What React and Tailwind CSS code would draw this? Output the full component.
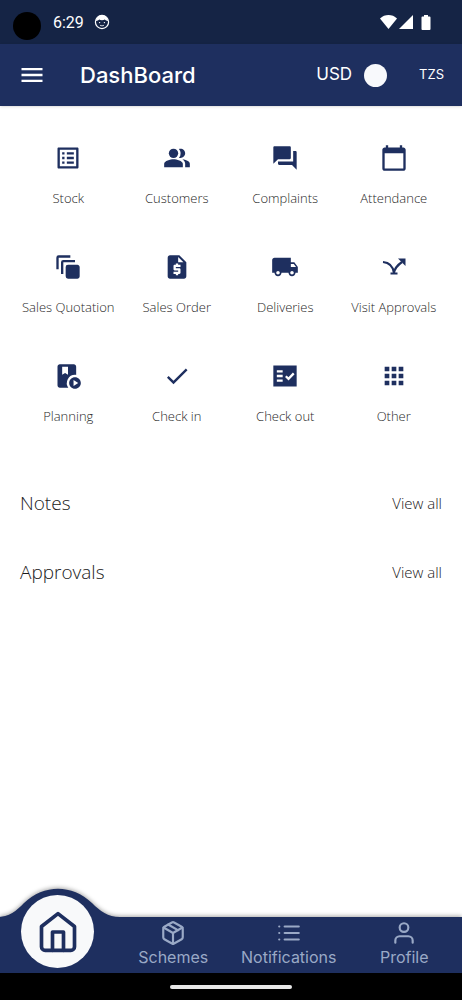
import React, { useState } from 'react';
import {
  MdMenu, MdListAlt, MdPeopleAlt, MdQuestionAnswer, MdCalendarToday,
  MdAutoAwesomeMotion, MdRequestQuote, MdLocalShipping, MdPlayLesson,
  MdCheck, MdApps
} from 'react-icons/md';
import { FiHome, FiPackage, FiList, FiUser } from 'react-icons/fi';

const VisitIcon = ({ className }) => (
  <svg viewBox="0 0 28 28" className={className} fill="none" aria-hidden="true">
    <path d="M3 9C9 9.5 13 13 14 20" stroke="currentColor" strokeWidth="2.2" />
    <path d="M14 20C14.5 15.5 17 12.5 22 9" stroke="currentColor" strokeWidth="2.2" />
    <path d="M18 5.5H25.5V13Z" fill="currentColor" />
    <path d="M10.5 20.5H17.5" stroke="currentColor" strokeWidth="2" />
  </svg>
);

const CheckOutIcon = ({ className }) => (
  <svg viewBox="0 0 24 24" className={className} aria-hidden="true">
    <path d="M2 3H22V21H2Z" fill="currentColor" />
    <path d="M5 8H10M5 12H10M5 16H10" stroke="#fff" strokeWidth="2" />
    <path d="M12.700 12.200 15 14.400 19.500 9.800" fill="none" stroke="#fff" strokeWidth="2" />
  </svg>
);

const menuItems = [
  { label: 'Stock', icon: MdListAlt },
  { label: 'Customers', icon: MdPeopleAlt },
  { label: 'Complaints', icon: MdQuestionAnswer },
  { label: 'Attendance', icon: MdCalendarToday },
  { label: 'Sales Quotation', icon: MdAutoAwesomeMotion },
  { label: 'Sales Order', icon: MdRequestQuote },
  { label: 'Deliveries', icon: MdLocalShipping },
  { label: 'Visit Approvals', icon: VisitIcon },
  { label: 'Planning', icon: MdPlayLesson },
  { label: 'Check in', icon: MdCheck },
  { label: 'Check out', icon: CheckOutIcon },
  { label: 'Other', icon: MdApps }
];

const tabs = [
  { label: 'Schemes', icon: FiPackage },
  { label: 'Notifications', icon: FiList },
  { label: 'Profile', icon: FiUser }
];

const StatusBar = () => (
  <div className="h-11 bg-[#152445] text-white flex items-center pl-[13px] pr-[31px]">
    <div className="w-7 h-7 mt-2 rounded-full bg-black"></div>
    <span className="ml-3 pt-px font-['Roboto',sans-serif] text-base">6:29</span>
    <svg viewBox="0 0 16 16" className="ml-[10px] w-4 h-4" fill="none" aria-hidden="true">
      <circle cx="8" cy="8" r="6.6" stroke="currentColor" strokeWidth="1.2" />
      <path d="M1.800 7C2.500 2.500 5.600 1.200 8 1.200s5.500 1.300 6.200 5.800C12.500 7 11.500 6.300 10.800 5.600 9.500 6.500 6.500 6.500 5.200 5.600 4.500 6.300 3.500 7 1.800 7Z" fill="currentColor" />
      <circle cx="5.6" cy="8.6" r="0.7" fill="currentColor" />
      <circle cx="10.4" cy="8.6" r="0.7" fill="currentColor" />
      <path d="M6 11.200C7 12 9 12 10 11.200" stroke="currentColor" strokeWidth="0.8" />
    </svg>
    <div className="ml-auto flex items-center gap-[2px]">
      <svg viewBox="0 0 17 14" className="w-[17px] h-[14px]" fill="currentColor" aria-hidden="true">
        <path d="M8.500 14 0 3.400C4.800-1.100 12.200-1.100 17 3.400Z" />
      </svg>
      <svg viewBox="0 0 14 14" className="w-[14px] h-[14px]" fill="currentColor" aria-hidden="true">
        <path d="M14 0V14H0Z" />
      </svg>
      <svg viewBox="0 0 10 15" className="ml-[6px] w-[10px] h-[15px]" fill="currentColor" aria-hidden="true">
        <path d="M3 0H7V1.500H8.600Q9.500 1.500 9.500 2.500V14Q9.500 15 8.600 15H1.400Q.5 15 .5 14V2.500Q.5 1.500 1.400 1.500H3Z" />
      </svg>
    </div>
  </div>
);

const App = () => {
  const [isTzs, setIsTzs] = useState(false);

  return (
    <div className="min-h-screen flex flex-col bg-white font-['Open_Sans','Noto_Sans',sans-serif]">
      <StatusBar />

      {/* App bar */}
      <header className="h-[62px] bg-[#1e2f5f] text-white flex items-center px-[18px] shadow font-['Inter',sans-serif]">
        <button aria-label="Open menu">
          <MdMenu className="w-7 h-7" />
        </button>
        <h1 className="ml-[34px] text-[22px] font-medium">DashBoard</h1>
        <label className="ml-auto flex items-center">
          <span className="text-[17px]">USD</span>
          <input
            type="checkbox"
            role="switch"
            checked={isTzs}
            onChange={() => setIsTzs(!isTzs)}
            className="appearance-none ml-3 mr-8 w-[23px] h-[23px] rounded-full bg-[#f8f9fc] checked:translate-x-4"
          />
          <span className="text-[13px]">TZS</span>
        </label>
      </header>

      <main className="flex-1">
        {/* Shortcuts */}
        <div className="grid grid-cols-4 px-[14px] pt-[38px]">
          {menuItems.map(({ label, icon: Icon }) => (
            <button key={label} className="h-[109px] flex flex-col items-center gap-4">
              <Icon className="w-7 h-7 text-[#1e2f5f]" />
              <span className="text-[13px] leading-5 font-light text-[#1f1f1f] whitespace-nowrap">{label}</span>
            </button>
          ))}
        </div>

        <div className="-mt-0.5">
          {['Notes', 'Approvals'].map((title) => (
            <section key={title} className="h-[69px] px-5 flex items-center justify-between font-light text-[#1a1a1a]">
              <h2 className="text-[19px]">{title}</h2>
              <a href="#" className="text-[15px]">View all</a>
            </section>
          ))}
        </div>
      </main>

      {/* Bottom tabs */}
      <nav className="relative h-14 bg-[#1e2f5f] grid grid-cols-4 drop-shadow-[0_-1px_2px_rgba(0,0,0,0.35)] font-['Inter',sans-serif]">
        <div className="relative flex justify-center">
          <svg viewBox="0 0 124 30" className="absolute bottom-full w-[124px] h-[30px]" aria-hidden="true">
            <path d="M0 30C14 30 20 24 28 16C48-3 76-3 96 16C104 24 112 30 124 30Z" fill="#1e2f5f" />
          </svg>
          <button
            aria-label="Home"
            className="absolute bottom-[5px] w-[73px] h-[73px] rounded-full bg-[#f8f9fa] text-[#1e2f5f] flex items-center justify-center"
          >
            <FiHome className="w-11 h-11" />
          </button>
        </div>
        {tabs.map(({ label, icon: Icon }) => (
          <button key={label} className="flex flex-col items-center pt-[3px] text-[#9aa9c6]">
            <Icon className="w-[26px] h-[26px]" />
            <span className="text-base leading-[22px]">{label}</span>
          </button>
        ))}
      </nav>

      <div className="relative h-[27px] bg-black flex items-center justify-center">
        <div className="w-[122px] h-1 rounded-full bg-[#e8e8e8]"></div>
      </div>
    </div>
  );
};

export default App;
